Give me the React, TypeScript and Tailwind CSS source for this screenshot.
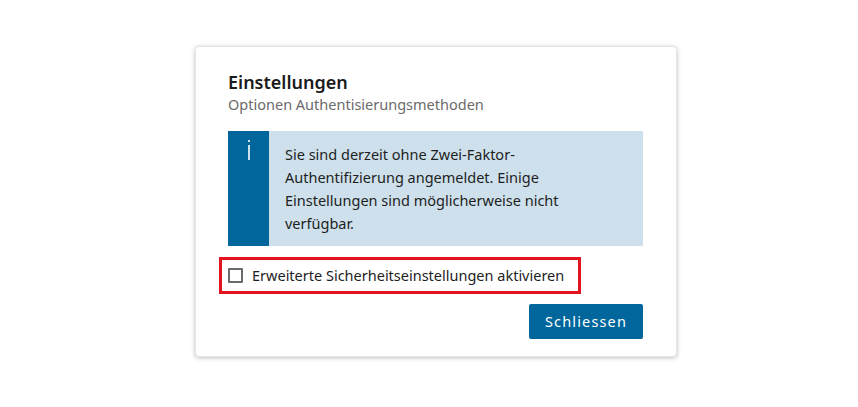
import { useState } from 'react';

export default function App() {
  const [checked, setChecked] = useState(false);

  return (
    <div className="w-[858px] h-[407px] bg-white flex pl-[195px] pt-[46px]" style={{ fontFamily: '"Noto Sans", "Open Sans", sans-serif' }}>
      <div className="w-[482px] h-[311px] bg-white rounded-[4px] border border-[#e6e6e6] shadow-[0_1px_4px_rgba(0,0,0,0.25)] pl-[32px] pr-[33px] pt-[23px]">
        <h2 className="text-[18px] font-semibold text-[#1b1b1b] leading-[24px]">Einstellungen</h2>
        <p className="text-[14.5px] text-[#6b6b6b] leading-[20px]">Optionen Authentisierungsmethoden</p>

        <div className="mt-[17px] h-[115px] flex bg-[#cde0eb]">
          <div className="w-[41px] shrink-0 bg-[#00669b] flex justify-center pt-[9px]">
            <svg width="2" height="20" viewBox="0 0 2 20">
              <rect x="0" y="0" width="2" height="2" fill="#cde0eb" />
              <rect x="0" y="5" width="2" height="15" fill="#cde0eb" />
            </svg>
          </div>
          <p className="pl-[16px] pt-[12px] pr-[40px] text-[14.5px] leading-[23px] text-[#1e1e1e] whitespace-nowrap">
            Sie sind derzeit ohne Zwei-Faktor-<br />
            Authentifizierung angemeldet. Einige<br />
            Einstellungen sind möglicherweise nicht<br />
            verfügbar.
          </p>
        </div>

        <label className="mt-[11px] -ml-[9px] w-[362px] h-[37px] border-[3px] border-[#e3141e] flex items-center pl-[6px] gap-[9px] cursor-pointer">
          <input type="checkbox" checked={checked} onChange={() => setChecked(!checked)} className="sr-only" />
          <span className="w-[15px] h-[15px] shrink-0 border-2 border-[#6b6b6b] rounded-[1px] bg-white" />
          <span className="text-[14.5px] text-[#1e1e1e] whitespace-nowrap">Erweiterte Sicherheitseinstellungen aktivieren</span>
        </label>

        <div className="flex justify-end mt-[10px]">
          <button className="w-[114px] h-[35px] bg-[#00669b] text-white text-[14.5px] font-normal tracking-[0.08em] rounded-[2px]">
            Schliessen
          </button>
        </div>
      </div>
    </div>
  );
}
